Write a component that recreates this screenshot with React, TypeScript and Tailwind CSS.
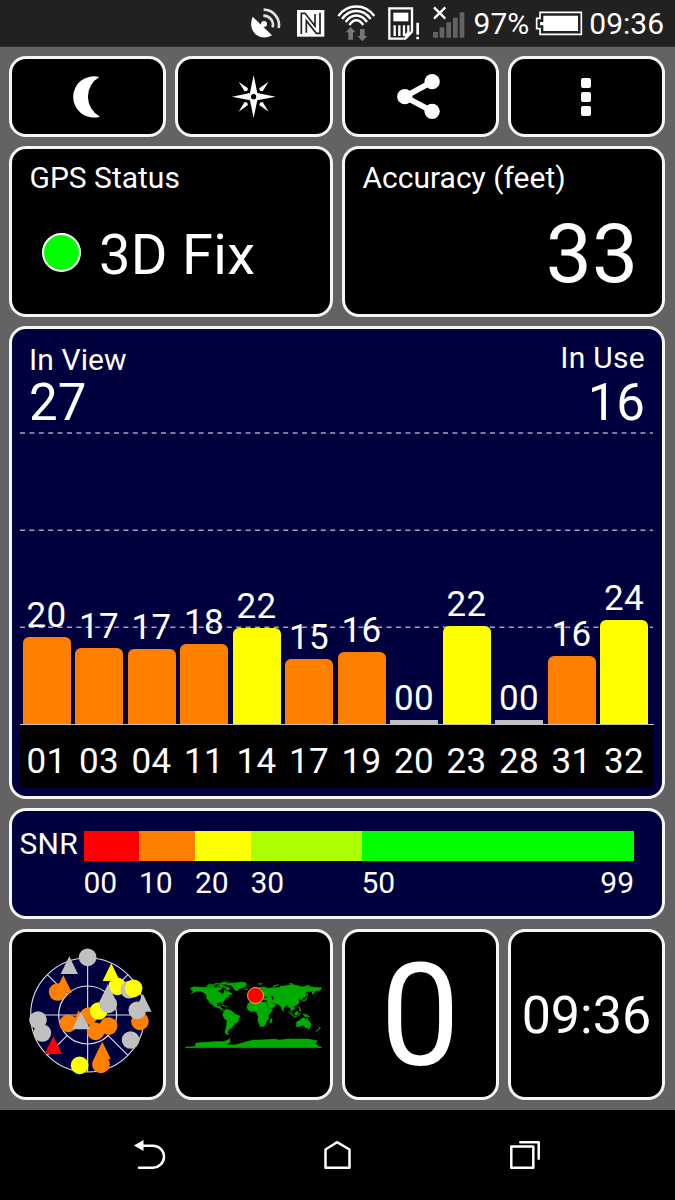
import type { ReactNode } from 'react'

/**
 * A satellite shown in the signal chart.
 */
interface Satellite {
  /** Satellite number. */
  id: string
  /** Signal-to-noise ratio as displayed. */
  snr: string
  /** Bar height in pixels. */
  height: number
}

const SATELLITES: Satellite[] = [
  { id: '01', snr: '20', height: 87 },
  { id: '03', snr: '17', height: 76 },
  { id: '04', snr: '17', height: 75 },
  { id: '11', snr: '18', height: 80 },
  { id: '14', snr: '22', height: 96 },
  { id: '17', snr: '15', height: 65 },
  { id: '19', snr: '16', height: 72.5 },
  { id: '20', snr: '00', height: 4 },
  { id: '23', snr: '22', height: 98 },
  { id: '28', snr: '00', height: 4 },
  { id: '31', snr: '16', height: 68 },
  { id: '32', snr: '24', height: 104 },
]

const GRID_LINES = [433, 530.3, 627.3]

const SNR_SCALE = [
  { label: '00', className: 'w-[55.5px]', color: 'bg-[#ff0000]' },
  { label: '10', className: 'w-[56px]', color: 'bg-[#ff8000]' },
  { label: '20', className: 'w-[55.5px]', color: 'bg-[#ffff00]' },
  { label: '30', className: 'w-[111px]', color: 'bg-[#aaff00]' },
  { label: '50', className: 'flex-1', color: 'bg-[#00ff00]' },
]

type SkyMarker = ['circle' | 'triangle', number, number, string]

// Painted in order, so later markers cover earlier ones
const SKY_MARKERS: SkyMarker[] = [
  ['circle', 233, 82, '#c0c0c0'],
  ['triangle', 178, 106, '#c0c0c0'],
  ['triangle', 160, 162, '#ff8000'],
  ['circle', 143, 186, '#ff8000'],
  ['triangle', 304, 127, '#ffff00'],
  ['circle', 322, 169, '#ffff00'],
  ['circle', 358, 179, '#c0c0c0'],
  ['circle', 371, 175, '#ffff00'],
  ['circle', 390, 274, '#ff8000'],
  ['triangle', 399, 219, '#c0c0c0'],
  ['circle', 382, 241, '#c0c0c0'],
  ['circle', 362, 330, '#c0c0c0'],
  ['circle', 84, 270, '#c0c0c0'],
  ['circle', 97, 309, '#c0c0c0'],
  ['triangle', 130, 346, '#ff0000'],
  ['circle', 209, 406, '#ffff00'],
  ['circle', 175, 280, '#ff8000'],
  ['triangle', 206, 268, '#ff8000'],
  ['circle', 236, 258, '#ff8000'],
  ['circle', 257, 304, '#ff8000'],
  ['circle', 296, 288, '#ff8000'],
  ['circle', 266, 243, '#ffff00'],
  ['triangle', 294, 190, '#c0c0c0'],
  ['circle', 295, 223, '#c0c0c0'],
  ['triangle', 213, 272, '#c0c0c0'],
  ['triangle', 277, 362, '#ff8000'],
  ['circle', 273, 403, '#ff8000'],
]

// Outlines as longitude/latitude pairs
const LAND = [
  // North America
  '-168,66 -162,70 -156,71 -141,70 -128,70 -115,68 -108,68 -98,68 -95,72 -90,69 -85,69 -82,67 -87,64 -94,61 -94,58 -85,55 -82,52 -80,51 -79,55 -77,57 -78,62 -73,62 -70,59 -65,59 -60,55 -56,52 -60,50 -66,50 -64,46 -66,44 -70,43 -74,40 -76,36 -81,31 -80,26 -82,28 -84,30 -90,30 -97,28 -97,22 -94,18 -91,19 -90,21 -87,21 -88,16 -83,15 -83,10 -80,9 -77,8 -80,7 -84,9 -87,13 -93,15 -100,17 -105,20 -109,26 -113,31 -114,30 -110,23 -115,28 -118,34 -124,40 -124,48 -130,55 -140,60 -150,60 -158,56 -166,53 -158,58 -165,62 -161,64',
  // Arctic islands
  '-125,72 -120,76 -116,73 -105,73 -102,69 -115,69',
  '-120,77 -110,78 -98,76 -102,75 -112,74',
  '-97,73 -91,74 -92,77 -82,76 -80,74 -90,74',
  '-90,80 -80,83 -65,83 -70,80 -78,77 -88,77',
  '-90,73 -80,74 -72,71 -62,67 -64,63 -70,62 -73,65 -72,68 -80,70 -88,71',
  '-100,80 -92,81 -94,78 -104,78',
  // Greenland
  '-73,78 -62,81 -45,82 -32,83.6 -20,82 -18,77 -21,72 -26,69 -38,66 -43,60 -50,63 -54,70 -58,75 -68,76',
  '-24,65 -20,66 -14,65 -18,63',
  // Caribbean
  '-85,22 -80,23 -74,20 -78,20',
  '-73,20 -68,19 -71,17',
  // South America
  '-77,8 -72,12 -62,10 -55,6 -50,0 -44,-3 -35,-6 -39,-14 -41,-22 -48,-26 -53,-33 -58,-35 -57,-38 -62,-39 -65,-43 -68,-50 -65,-55 -70,-55 -75,-50 -73,-40 -71,-30 -70,-18 -76,-14 -81,-5 -80,1',
  // Africa
  '-6,36 10,37 11,34 20,31 30,31 33,30 37,21 43,12 51,12 46,3 40,-4 40,-15 35,-20 33,-27 27,-34 18,-34 12,-18 13,-8 9,0 9,4 4,6 -7,5 -13,9 -17,15 -16,23 -10,30',
  '49,-12 50,-16 47,-25 44,-24 44,-17',
  // Europe and Asia
  '-9,37 -9,43 -2,43 -4,48 4,52 8,54 9,57 12,54 20,55 24,59 30,60 22,61 25,65 21,65 17,61 16,56 11,59 6,58 5,62 14,68 25,71 40,67 44,68 55,69 68,69 72,73 82,73 90,75 104,78 112,75 130,71 140,73 160,70 180,69 180,65 176,62 163,60 162,55 156,51 156,58 162,61 153,59 142,59 136,54 141,52 140,48 135,43 129,41 129,36 126,35 125,39 118,39 122,37 119,35 122,30 117,24 110,21 107,19 109,12 105,9 101,13 103,2 100,6 98,16 94,16 90,22 86,20 80,15 80,9 77,8 73,18 70,21 66,25 57,26 51,28 48,30 51,25 56,26 59,22 52,16 44,13 39,21 35,29 36,36 27,37 26,40 23,37 19,42 13,45 18,40 16,38 9,44 3,43 0,40',
  '-5,50 1,51 0,53 -3,58 -5,58 -3,54',
  '-10,52 -6,52 -6,55 -9,54',
  '12,79 22,80 25,79 16,77',
  '52,71 56,75 68,77 58,73 56,71',
  '95,80 105,79 100,78',
  '140,75 150,75 145,74',
  // Japan and South East Asia
  '130,32 136,34 140,36 141,42 145,44 142,45 140,41 136,37 130,34',
  '142,46 143,54 144,49',
  '120,18 122,18 124,13 126,7 122,8 122,13',
  '95,5 104,-2 106,-6 101,-3',
  '105,-6 115,-8 114,-9 106,-8',
  '109,1 117,7 119,5 116,-4 110,-3',
  '119,-5 120,1 125,1 121,-1 123,-5 121,-3',
  '131,-1 141,-2 150,-9 145,-8 138,-8 133,-4',
  '80,9 82,7 80,6',
  // Australia and New Zealand
  '114,-22 114,-34 118,-35 124,-33 131,-31 137,-35 141,-38 147,-39 150,-37 153,-29 152,-25 146,-19 142,-11 140,-17 136,-15 136,-12 131,-11 126,-14 122,-18',
  '145,-41 148,-41 147,-43',
  '173,-35 178,-38 175,-41 174,-38',
  '172,-41 174,-42 168,-47 166,-46',
  // Antarctica
  '-180,-88.5 -155,-87 -152,-78 -130,-76 -100,-74 -78,-74 -68,-70 -62,-65 -63,-69 -61,-75 -70,-82 -50,-83 -30,-78 -15,-73 0,-70 30,-69 55,-67 70,-70 90,-67 120,-67 145,-67 170,-72 165,-78 172,-86 180,-88 180,-90 -180,-90',
]

function getBarColor(snr: number): string {
  if (snr === 0) return 'bg-[#c0c0c0]'
  return snr > 20 ? 'rounded-t-md bg-[#ffff00]' : 'rounded-t-md bg-[#ff8000]'
}

/**
 * Rounded, white bordered panel.
 */
function Panel({
  className,
  children,
}: {
  className: string
  children: ReactNode
}) {
  return (
    <div
      className={`overflow-hidden rounded-[17px] border-[3px] border-[#f6f6f6] ${className}`}
    >
      {children}
    </div>
  )
}

function StatusBar() {
  return (
    <header className="flex h-[47px] items-start justify-end border-b border-[#2d2a2c] bg-[#212121] pr-[11px]">
      <svg className="h-12 w-8" viewBox="39 0 96 144">
        <path d="M47 50 L105 106 Q80 120 57 104 Q34 82 47 50 Z" fill="#fff" />
        <path d="M68 86 L81 72" stroke="#fff" strokeWidth="8" />
        <circle cx="81" cy="72" r="9" fill="#fff" />
        <g fill="none" stroke="#e0e0e0" strokeWidth="8">
          <path d="M79 47 A28 28 0 0 1 107 82" />
          <path d="M80 29 A46 46 0 0 1 125 84" />
        </g>
      </svg>
      <svg className="ml-[14px] h-12 w-[29px]" viewBox="177 0 87 144">
        <path d="M180 30h82v80h-82z" fill="#fff" />
        <path
          d="M193 102 V40 H204 L234 78 V42 M249 38 V100 H238 L208 62 V98"
          fill="none"
          stroke="#212121"
          strokeWidth="5"
        />
      </svg>
      <svg className="ml-3 h-12 w-[39px]" viewBox="300 0 117 144">
        <g fill="none" stroke="#fff" strokeWidth="7">
          <path d="M304 48 C332 10 384 10 412 48" />
          <path d="M315 57 C338 25 378 25 401 57" />
          <path d="M326 66 C344 40 372 40 390 66" />
          <path d="M337 75 C350 56 366 56 379 75" />
        </g>
        <path d="M341 81 L356 97 H348 V119 H334 V97 H326 Z" fill="#777" />
        <path d="M376 124 L361 108 H369 V87 H383 V108 H391 Z" fill="#777" />
      </svg>
      <svg className="ml-[11px] h-12 w-[33px]" viewBox="450 0 99 144">
        <path d="M457 25 H525 V95 L505 116 H457 Z" fill="none" stroke="#fff" strokeWidth="7" />
        <path d="M469 38 H514 V64 H469 Z" fill="#fff" />
        <path d="M473 76 V108 M487 76 V108 M501 76 V108" stroke="#fff" strokeWidth="7" />
        <path d="M514 76 V98 L503 109" fill="none" stroke="#fff" strokeWidth="7" />
        <path d="M542 68 V104 M542 110 V118" stroke="#fff" strokeWidth="8" />
      </svg>
      <svg className="ml-[12px] h-12 w-[33px]" viewBox="18 0 99 144">
        <path d="M24 22 L58 56 M58 22 L24 56" stroke="#fff" strokeWidth="7" />
        <path
          d="M21 96h15v17h-15z M41 82h14v31h-14z M61 67h14v46h-14z M81 53h14v60h-14z M101 37h14v76h-14z"
          fill="#636363"
        />
      </svg>
      <span className="ml-[9px] mt-[9px] text-[30px] leading-none">97%</span>
      <svg className="ml-[6px] h-12 w-12" viewBox="327 0 144 144">
        <path d="M342 37 H466 V103 H342 V86 H332 V55 H342 Z" fill="none" stroke="#fff" strokeWidth="5" />
        <path d="M352 47 H456 V93 H352 V76 H342 V66 H352 Z" fill="#fff" />
      </svg>
      <span className="ml-[6px] mt-[9px] text-[30px] leading-none">09:36</span>
    </header>
  )
}

function Toolbar() {
  return (
    <div className="grid h-[81px] grid-cols-4 gap-[9px]">
      <Panel className="flex bg-black">
        <svg className="h-full w-full" viewBox="36 39 454 225" preserveAspectRatio="none">
          <path d="M298 93 A62 62 0 1 0 300 212 A68 68 0 0 1 298 93 Z" fill="#fff" />
        </svg>
      </Panel>
      <Panel className="flex bg-black">
        <svg className="h-full w-full" viewBox="535 39 454 225" preserveAspectRatio="none">
          <path
            d="M762 87 L773 141 L828 152 L773 163 L762 216 L751 163 L697 152 L751 141 Z"
            fill="#fff"
          />
          <path
            d="M717 107 L745 127 L743 134 L735 136 Z M807 107 L779 127 L781 134 L789 136 Z M717 197 L745 177 L743 170 L735 168 Z M807 197 L779 177 L781 170 L789 168 Z"
            fill="#fff"
          />
          <circle cx="762" cy="152" r="8" fill="#000" />
        </svg>
      </Panel>
      <Panel className="flex bg-black">
        <svg className="h-full w-full" viewBox="28.5 39 454 225" preserveAspectRatio="none">
          <path d="M290 107 L208 152 L290 196" fill="none" stroke="#fff" strokeWidth="17" />
          <circle cx="290" cy="107" r="23" fill="#fff" />
          <circle cx="208" cy="152" r="23" fill="#fff" />
          <circle cx="290" cy="196" r="23" fill="#fff" />
        </svg>
      </Panel>
      <Panel className="flex flex-col items-center justify-center gap-1 bg-black">
        <span className="size-[10px] rounded-[2px] bg-white" />
        <span className="size-[10px] rounded-[2px] bg-white" />
        <span className="size-[10px] rounded-[2px] bg-white" />
      </Panel>
    </div>
  )
}

/**
 * Bars for the signal strength of each satellite, with the totals above.
 */
function SignalChart() {
  return (
    <Panel className="relative flex h-[473px] flex-col bg-[#00003f] px-2">
      <svg className="absolute left-2 top-0 h-[467px] w-[635px]" viewBox="20 329 635 467">
        {GRID_LINES.map((y) => (
          <path
            key={y}
            d={`M20 ${y} H653`}
            stroke="#a3a3c0"
            strokeWidth="1.6"
            strokeDasharray="5 4.4"
          />
        ))}
      </svg>
      <div className="relative flex justify-between px-[9px] pt-[16px]">
        <div>
          <p className="text-[30px] leading-none tracking-[0.1px]">In View</p>
          <p className="mt-[2px] text-[51px] leading-none">27</p>
        </div>
        <div className="-mt-[2px] text-right">
          <p className="text-[30px] leading-none tracking-[0.3px]">In Use</p>
          <p className="mt-[4px] text-[51px] leading-none">16</p>
        </div>
      </div>
      <div className="relative flex flex-1 items-end gap-[4.5px] border-b border-[#c0c0c0] pl-[2.5px]">
        {SATELLITES.map((sat) => (
          <div key={sat.id} className="flex w-12 flex-col items-center">
            <span className="mb-1 text-[35px] leading-none tracking-[0.3px]">{sat.snr}</span>
            <div
              className={`w-full ${getBarColor(Number(sat.snr))}`}
              style={{ height: sat.height }}
            />
          </div>
        ))}
      </div>
      <div className="relative mb-2 flex h-[63px] gap-[4.5px] bg-black pl-[2.5px] pt-[19px]">
        {SATELLITES.map((sat) => (
          <span
            key={sat.id}
            className="w-12 text-center text-[35px] leading-none tracking-[0.3px]"
          >
            {sat.id}
          </span>
        ))}
      </div>
    </Panel>
  )
}

function SnrLegend() {
  return (
    <Panel className="flex h-[111px] bg-[#00003f] pl-[7.5px] pr-[28px] pt-[20px]">
      <span className="-mt-[2px] w-[64px] text-[30px] leading-none tracking-[0.3px]">SNR</span>
      <div className="flex-1">
        <div className="flex h-[30px]">
          {SNR_SCALE.map(({ label, className, color }) => (
            <div key={label} className={`${className} ${color}`} />
          ))}
        </div>
        <div className="mt-[7px] flex text-[30px] leading-none">
          {SNR_SCALE.map(({ label, className }) => (
            <span key={label} className={className}>
              {label}
            </span>
          ))}
          <span>99</span>
        </div>
      </div>
    </Panel>
  )
}

function SkyView() {
  return (
    <svg className="h-full w-full" viewBox="6 6 454 495" preserveAspectRatio="none">
      <g fill="#00003f" stroke="#d8d8e0" strokeWidth="3.5">
        <circle cx="233" cy="255" r="171" />
        <circle cx="233" cy="255" r="87" />
        <path d="M62 255 H404 M233 84 V426 M112 134 L172 194 M354 134 L294 194 M112 376 L172 316 M354 376 L294 316" />
      </g>
      {SKY_MARKERS.map(([shape, x, y, color], index) =>
        shape === 'circle' ? (
          <circle key={index} cx={x} cy={y} r="26.5" fill={color} />
        ) : (
          <path key={index} d={`M${x} ${y - 27} l26 53 h-52 Z`} fill={color} />
        )
      )}
    </svg>
  )
}

function WorldMap() {
  return (
    <svg className="h-full w-full" viewBox="24.75 6 454 495" preserveAspectRatio="none">
      <g
        transform="translate(251 251) scale(1.133 -1.133)"
        fill="#00ab00"
        stroke="#00ab00"
        strokeWidth="1.2"
      >
        {LAND.map((points) => (
          <polygon key={points} points={points} />
        ))}
        {/* Black and Caspian seas */}
        <path d="M28 42 L32 46 L41 42 Z M47 46 L53 46 L53 37 L50 37 Z" fill="#000" stroke="none" />
      </g>
      <circle cx="257.500" cy="196.500" r="24" fill="#ff0000" stroke="#e8c800" strokeWidth="3" />
    </svg>
  )
}

function NavigationBar() {
  return (
    <nav className="flex h-[90px] bg-black">
      <svg
        className="h-full w-full"
        viewBox="0 0 675 90"
        fill="none"
        stroke="#fff"
        strokeWidth="2.5"
        strokeLinejoin="round"
        strokeLinecap="round"
      >
        <path d="M134 35.500 L143.500 30 V41 Z" fill="#fff" stroke="none" />
        <path d="M142 35.700 H153 A11 11 0 0 1 153 57.700 H139" />
        <path d="M325.500 57.700 V39.500 L337 32.200 L349.500 39.500 V57.700 Z" />
        <path d="M511.300 36.500 H533.300 V57.700 H511.300 Z" />
        <path d="M520.300 32.200 H538.700 V48.700" />
      </svg>
    </nav>
  )
}

export default function App() {
  return (
    <div className="flex h-[1200px] w-[675px] flex-col bg-[#636363] font-['Roboto',sans-serif] text-white">
      <StatusBar />
      <main className="flex flex-1 flex-col gap-[9px] pl-[9px] pr-[10px] pt-[9px]">
        <Toolbar />
        <div className="grid h-[171px] grid-cols-2 gap-[9px]">
          <Panel className="bg-black px-[17.5px] pt-[14px]">
            <p className="text-[30px] leading-none">GPS Status</p>
            <div className="mt-[34px] flex items-center pl-[12.5px]">
              <span className="mb-[5px] size-[39px] rounded-full border-2 border-white bg-[#00ff00]" />
              <span className="ml-[18px] text-[56px] leading-none tracking-[0.3px]">3D Fix</span>
            </div>
          </Panel>
          <Panel className="bg-black px-[18px] pt-[14px]">
            <p className="text-[30px] leading-none">Accuracy (feet)</p>
            <p className="mt-[20px] pr-[6px] text-right text-[82px] leading-none">33</p>
          </Panel>
        </div>
        <SignalChart />
        <SnrLegend />
        <div className="mt-px grid h-[171px] grid-cols-4 gap-[9px]">
          <Panel className="bg-black">
            <SkyView />
          </Panel>
          <Panel className="bg-black">
            <WorldMap />
          </Panel>
          <Panel className="flex items-center justify-center bg-black pt-[5px] text-[142px] leading-none">
            0
          </Panel>
          <Panel className="flex items-center justify-center bg-black pt-[3px] text-[52px] leading-none">
            09:36
          </Panel>
        </div>
      </main>
      <NavigationBar />
    </div>
  )
}
